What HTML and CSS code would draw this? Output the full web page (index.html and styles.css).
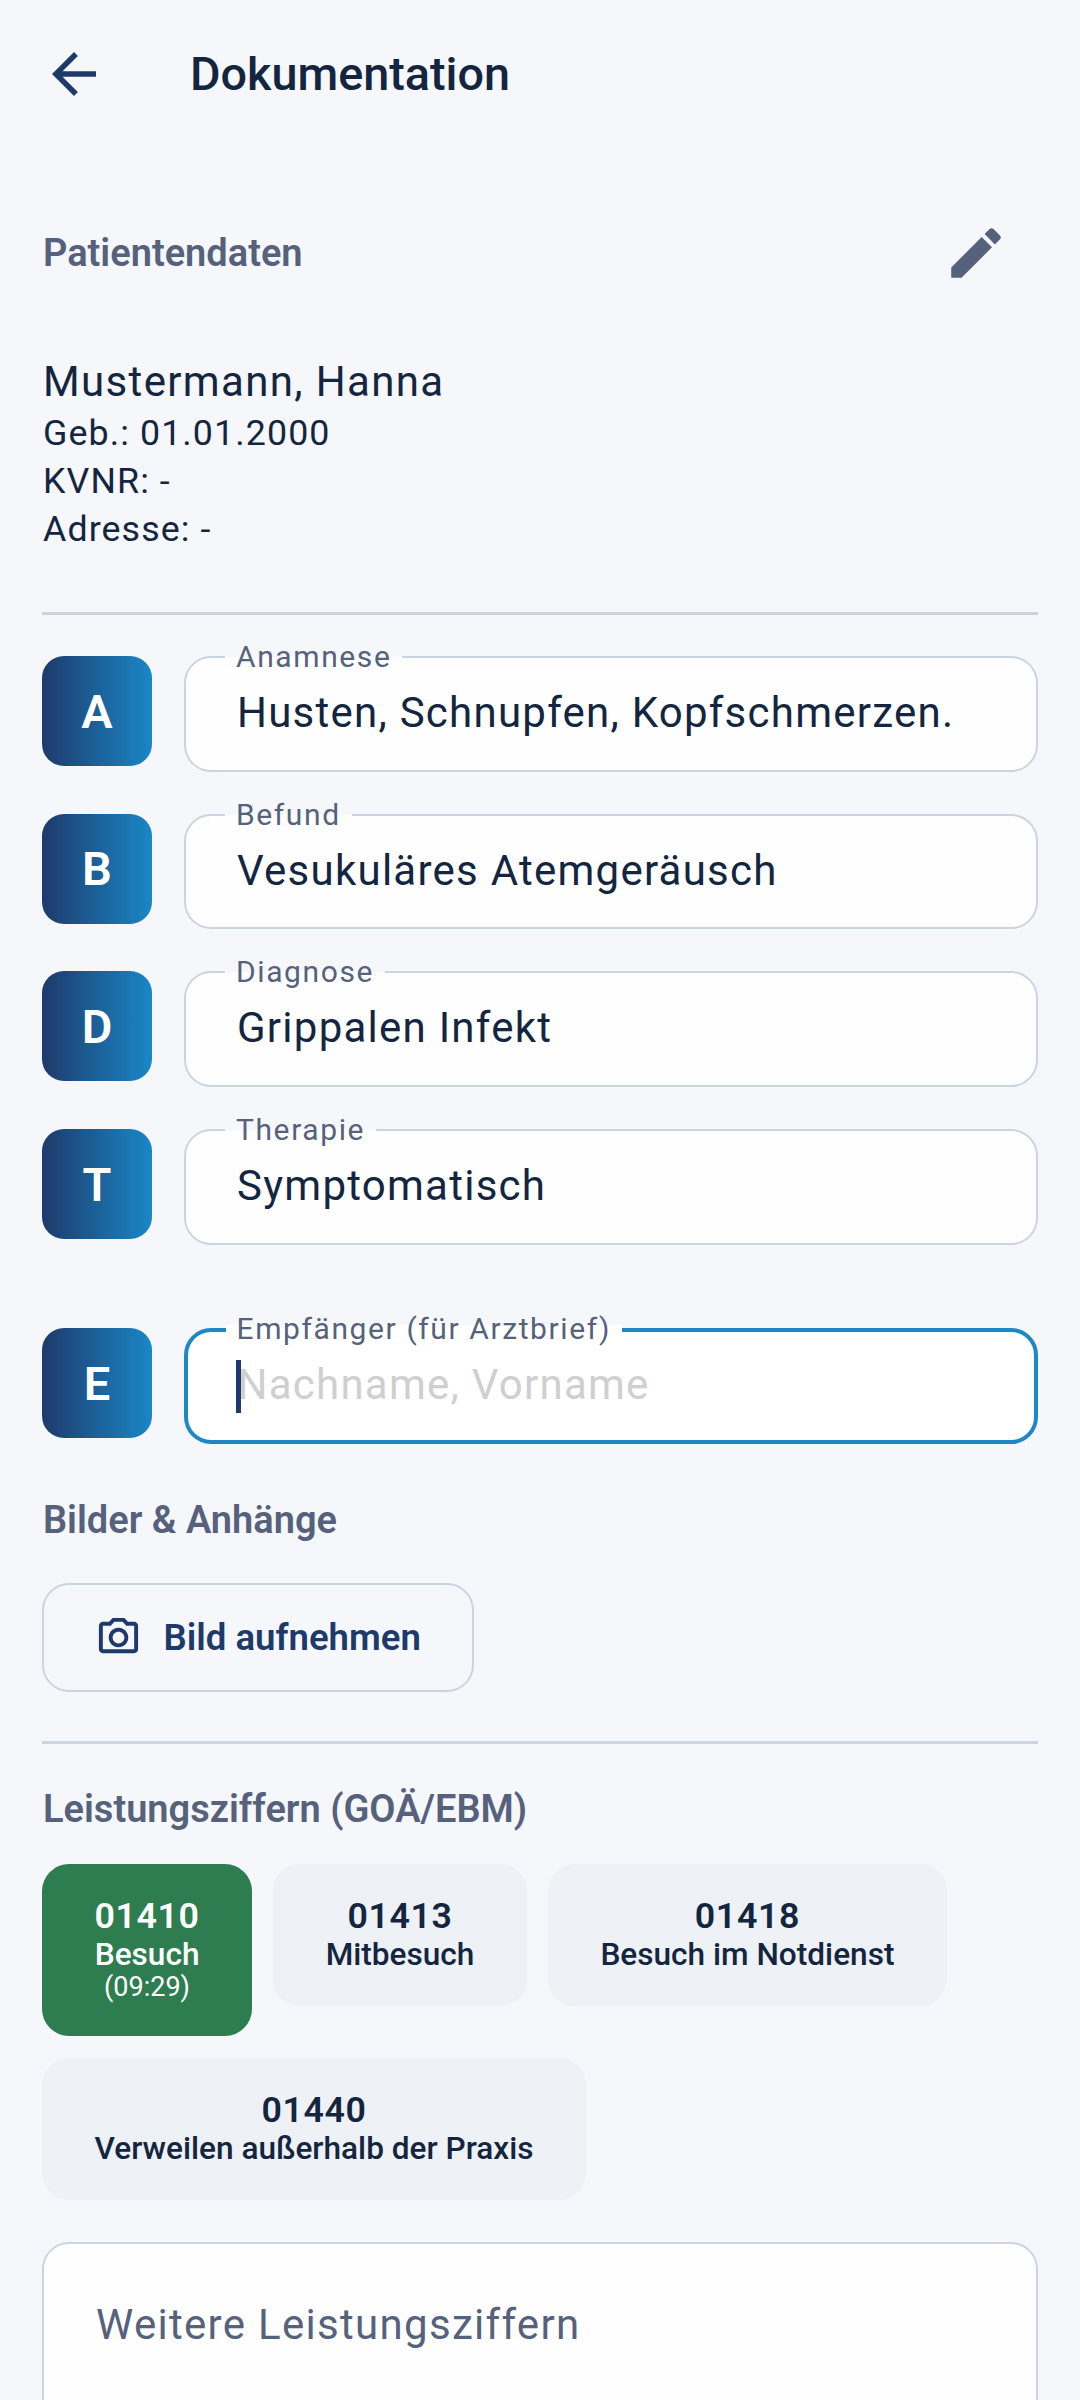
FILE: index.html
```html
<!DOCTYPE html>
<html lang="de">
<head>
<meta charset="utf-8">
<title>Dokumentation</title>
<link rel="stylesheet" href="styles.css">
</head>
<body>
<header class="topbar">
  <svg class="icon-back" viewBox="0 0 24 24"><path d="M20 11H7.83l5.59-5.59L12 4l-8 8 8 8 1.41-1.41L7.83 13H20v-2z"/></svg>
  <h1 class="title">Dokumentation</h1>
</header>
<main class="content">
  <div class="patient-head">
    <h2 class="section-title">Patientendaten</h2>
    <svg class="icon-edit" viewBox="0 0 24 24"><path d="M3 17.25V21h3.75L17.81 9.94l-3.75-3.75L3 17.25zM20.71 7.04c.39-.39.39-1.02 0-1.41l-2.34-2.34c-.39-.39-1.02-.39-1.41 0l-1.83 1.83 3.75 3.75 1.83-1.83z"/></svg>
  </div>
  <div class="patient">
    <div class="patient-name">Mustermann, Hanna</div>
    <div class="patient-line">Geb.: 01.01.2000</div>
    <div class="patient-line">KVNR: -</div>
    <div class="patient-line">Adresse: -</div>
  </div>
  <hr class="divider divider-first">
  <div class="rows">
    <div class="row">
      <div class="badge">A</div>
      <div class="field"><span class="label">Anamnese</span><span class="value">Husten, Schnupfen, Kopfschmerzen.</span></div>
    </div>
    <div class="row">
      <div class="badge">B</div>
      <div class="field"><span class="label">Befund</span><span class="value">Vesukuläres Atemgeräusch</span></div>
    </div>
    <div class="row">
      <div class="badge">D</div>
      <div class="field"><span class="label">Diagnose</span><span class="value">Grippalen Infekt</span></div>
    </div>
    <div class="row">
      <div class="badge">T</div>
      <div class="field"><span class="label">Therapie</span><span class="value">Symptomatisch</span></div>
    </div>
  </div>
  <div class="row row-recipient">
    <div class="badge">E</div>
    <div class="field field-focus"><span class="label">Empfänger (für Arztbrief)</span><span class="caret"></span><span class="value placeholder">Nachname, Vorname</span></div>
  </div>
  <h2 class="section-title section-images">Bilder &amp; Anhänge</h2>
  <button class="photo-btn" type="button">
    <svg class="icon-camera" viewBox="0 0 24 24"><path d="M20 4h-3.17L15 2H9L7.17 4H4c-1.1 0-2 .9-2 2v12c0 1.1.9 2 2 2h16c1.1 0 2-.9 2-2V6c0-1.1-.9-2-2-2zm0 14H4V6h4.05l1.83-2h4.24l1.83 2H20v12zM12 7c-2.76 0-5 2.24-5 5s2.24 5 5 5 5-2.24 5-5-2.24-5-5-5zm0 8c-1.65 0-3-1.35-3-3s1.35-3 3-3 3 1.35 3 3-1.35 3-3 3z"/></svg>
    <span>Bild aufnehmen</span>
  </button>
  <hr class="divider divider-second">
  <h2 class="section-title section-codes">Leistungsziffern (GOÄ/EBM)</h2>
  <div class="chips">
    <div class="chip chip-active"><span class="chip-code">01410</span><span class="chip-name">Besuch</span><span class="chip-time">(09:29)</span></div>
    <div class="chip"><span class="chip-code">01413</span><span class="chip-name">Mitbesuch</span></div>
    <div class="chip"><span class="chip-code">01418</span><span class="chip-name">Besuch im Notdienst</span></div>
    <div class="chip"><span class="chip-code">01440</span><span class="chip-name">Verweilen außerhalb der Praxis</span></div>
  </div>
  <div class="more-field">Weitere Leistungsziffern</div>
</main>
</body>
</html>
```
FILE: styles.css
```css
* { box-sizing: border-box; }
html, body { margin: 0; padding: 0; height: 2400px; overflow: hidden; }
body { background: #f5f7fb; font-family: Roboto, "Noto Sans", sans-serif; color: #14263f; }
h1, h2 { margin: 0; }

.topbar { height: 148px; display: flex; align-items: center; padding-left: 41px; }
.icon-back { width: 66px; height: 66px; fill: #1e3a6b; flex: none; }
.title { margin-left: 83px; font-size: 46.75px; font-weight: 500; line-height: 56px; color: #14263f; }

.content { padding: 0 42px; }
.patient-head { margin-top: 72px; height: 66px; display: flex; align-items: center; justify-content: space-between; padding-right: 29px; }
.section-title { font-size: 38px; font-weight: 600; line-height: 44px; color: #56627b; padding-left: 1px; }
.icon-edit { width: 66px; height: 66px; fill: #56627b; }

.patient { margin-top: 68px; padding-left: 1px; }
.patient-name { font-size: 42px; line-height: 55px; letter-spacing: 1.35px; }
.patient-line { font-size: 35.75px; line-height: 48px; letter-spacing: 1.1px; }

.divider { border: 0; height: 2.5px; background: #cbd5e1; margin: 0; }
.divider-first { margin-top: 59px; }
.divider-second { margin-top: 49px; }

.rows { margin-top: 41.5px; display: flex; flex-direction: column; gap: 42.2px; }
.row { display: flex; gap: 32px; align-items: flex-start; }
.row-recipient { margin-top: 83.5px; }
.badge { width: 110px; height: 110px; flex: none; border-radius: 22px; background: linear-gradient(90deg, #1e3a6b, #1a87c7); color: #fff; font-size: 47px; font-weight: 600; display: flex; align-items: center; justify-content: center; }

.field { position: relative; flex: 1; height: 115.5px; background: #fefefe; border: 2.5px solid #cbd5e1; border-radius: 27px; padding: 29px 0 0 51px; }
.field-focus { background: #fff; border: 4px solid #1e88c7; padding: 26.5px 0 0 49.5px; }
.label { position: absolute; top: -19px; left: 39px; padding: 0 11px; font-size: 30px; line-height: 36px; letter-spacing: 1.6px; color: #56627b; background: linear-gradient(#f5f7fb 49%, #fefefe 49%); }
.value { display: block; font-size: 42px; line-height: 52px; letter-spacing: 1.25px; color: #14263f; }
.placeholder { color: #cfcfcf; }
.field-focus .label { top: -21px; left: 37.5px; background: linear-gradient(#f5f7fb 40%, #fff 40%); }
.caret { position: absolute; left: 47.5px; top: 28px; width: 5px; height: 53px; background: #1e3a6b; }

.section-images { margin-top: 54.5px; }
.photo-btn { margin-top: 41px; width: 432px; height: 109px; display: flex; align-items: center; gap: 22px; padding: 0 0 0 50.5px; background: transparent; border: 2.5px solid #cbd5e1; border-radius: 27px; font-family: inherit; font-size: 36.6px; font-weight: 600; color: #1e3a6b; }
.icon-camera { width: 47px; height: 47px; fill: #1e3a6b; flex: none; }

.section-codes { margin-top: 43.5px; }
.chips { margin-top: 32.5px; display: flex; flex-wrap: wrap; gap: 22px 21px; align-items: flex-start; }
.chip { display: flex; flex-direction: column; align-items: center; padding: 31px 52.5px 34px; border-radius: 27px; background: #eef1f6; color: #14263f; }
.chip-active { background: #2e7d50; color: #fff; padding-bottom: 33px; }
.chip-code { font-size: 35.75px; font-weight: 600; line-height: 42px; letter-spacing: 0.6px; }
.chip-name { font-size: 31.6px; font-weight: 500; line-height: 35px; }
.chip-time { font-size: 27px; line-height: 31px; }

.more-field { margin-top: 42px; height: 200px; background: #fefefe; border: 2.5px solid #cbd5e1; border-radius: 27px; padding: 55px 0 0 52px; font-size: 42px; line-height: 52px; letter-spacing: 1.3px; color: #56627b; }
```
